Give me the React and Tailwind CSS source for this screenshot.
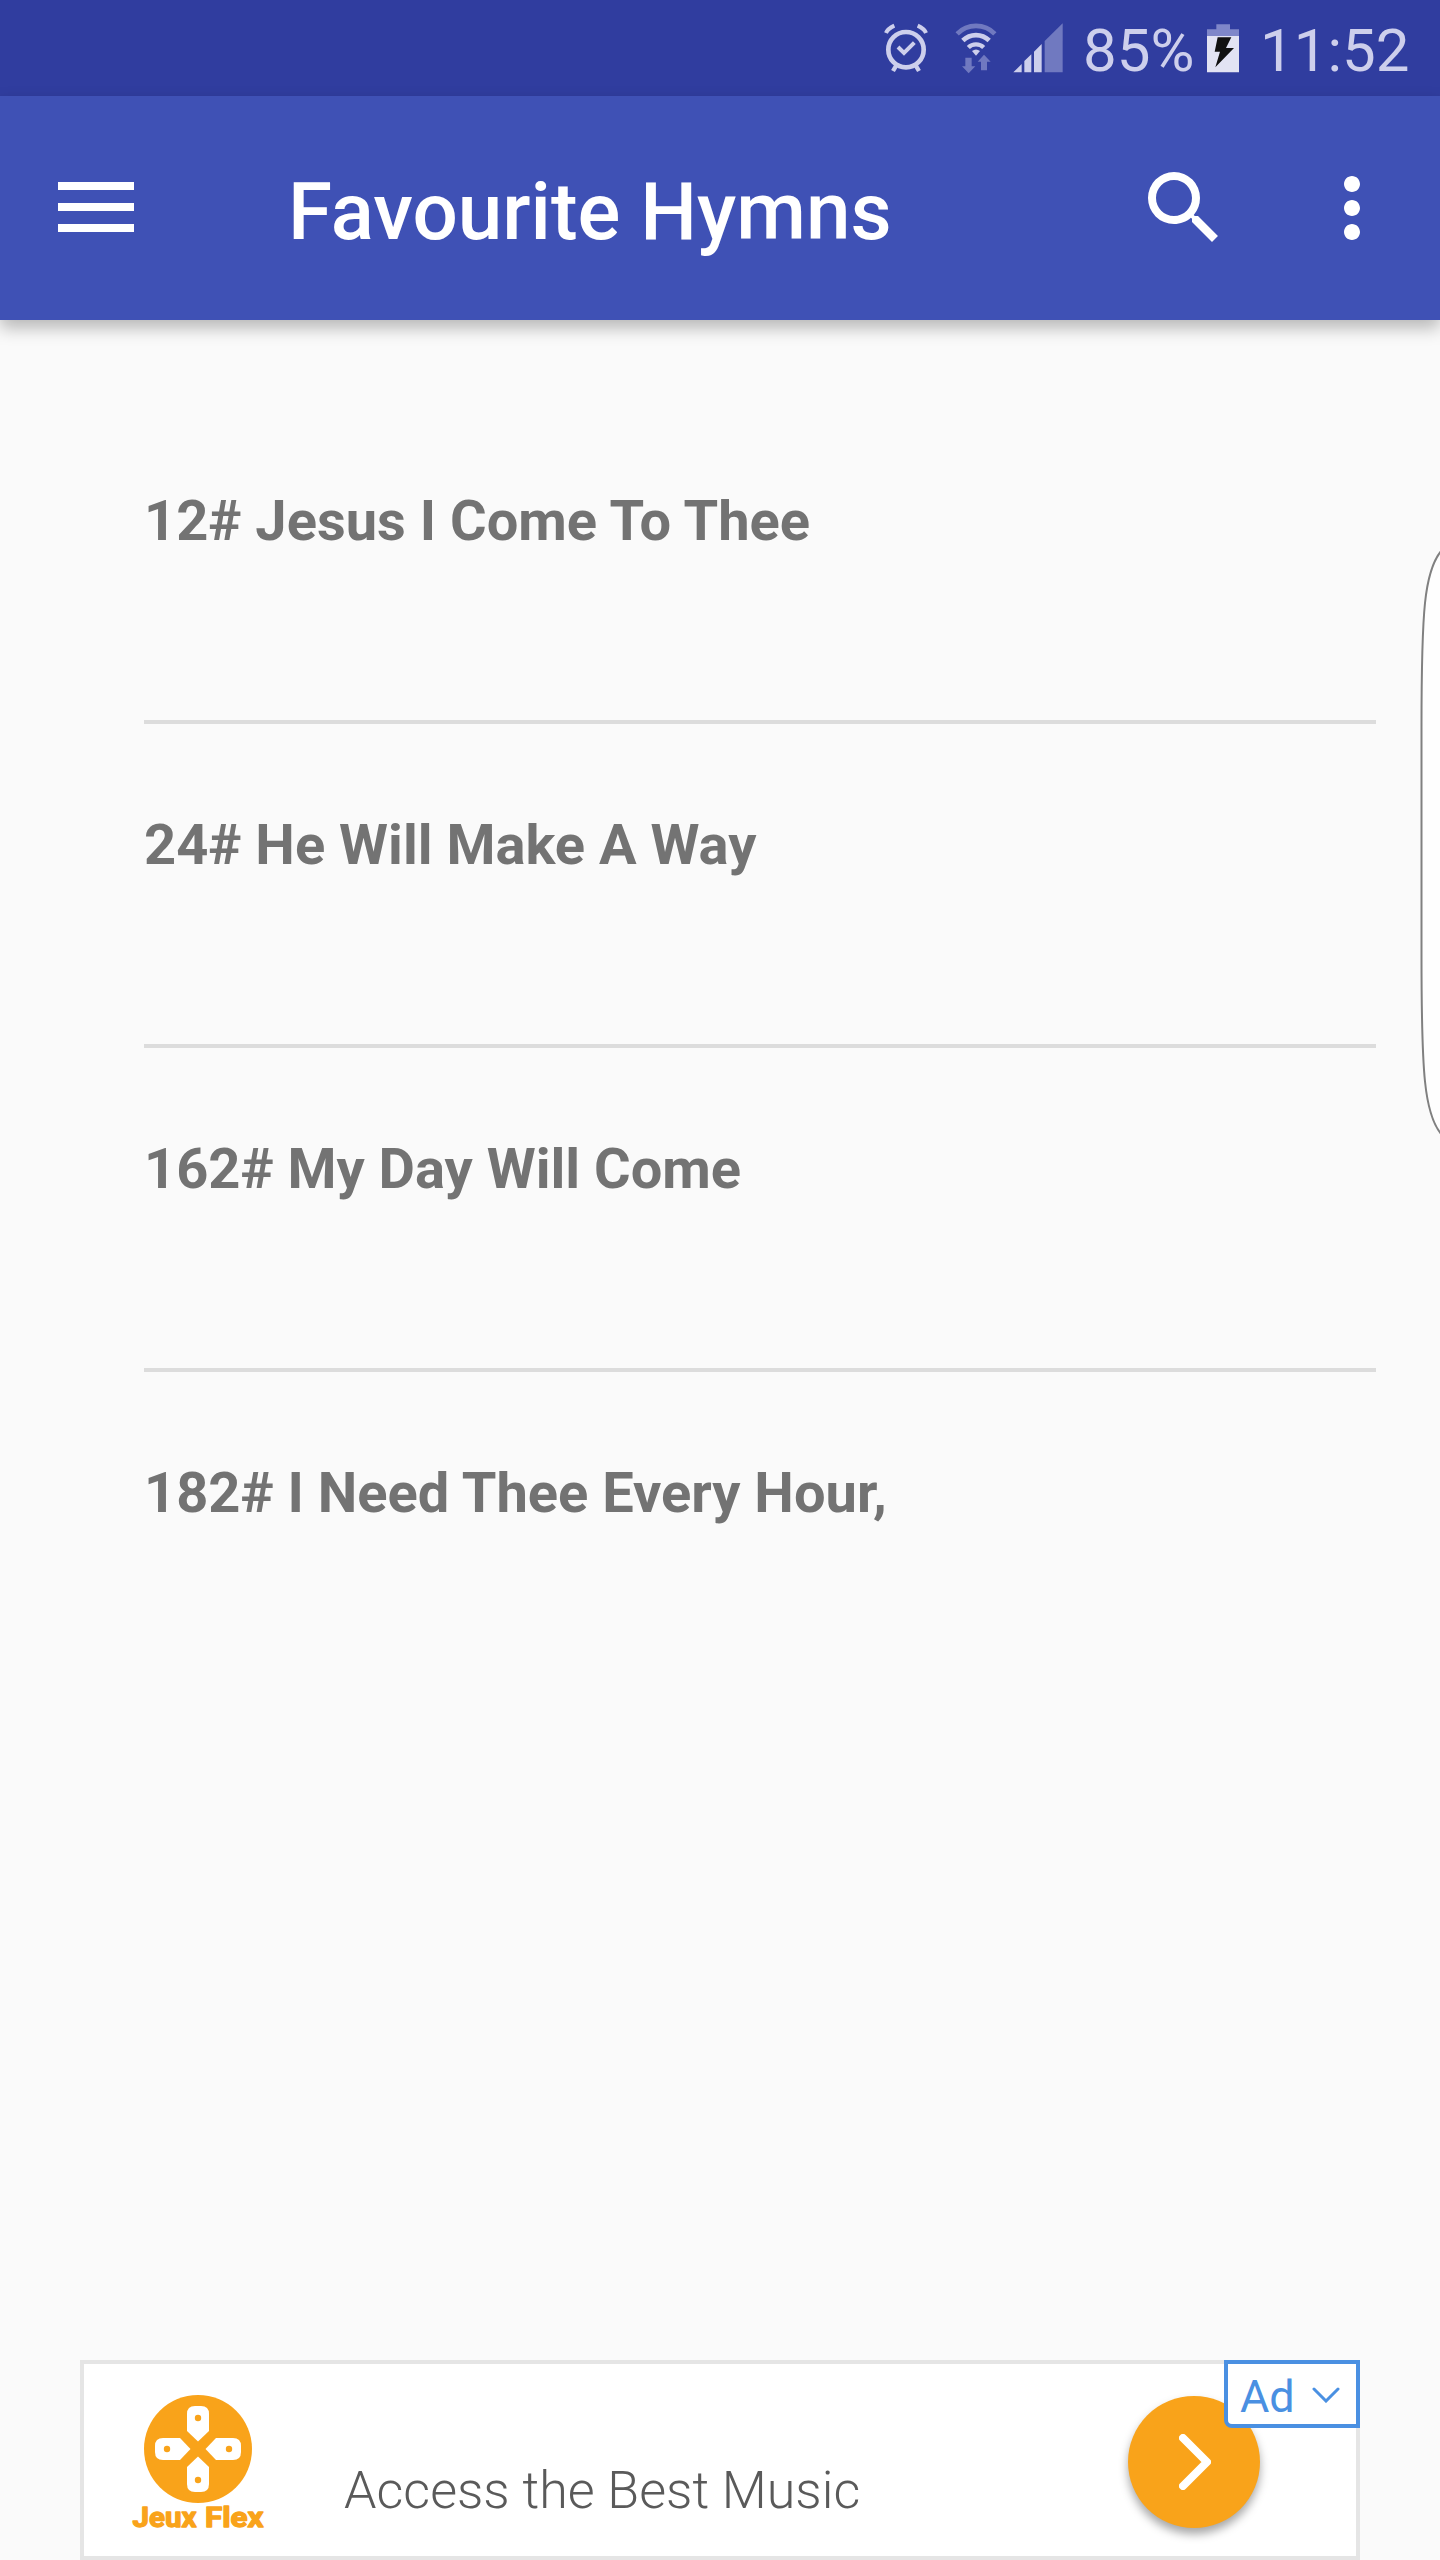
import { MdMoreVert, MdSearch } from 'react-icons/md'

const hymns = [
  { id: 12, title: 'Jesus I Come To Thee' },
  { id: 24, title: 'He Will Make A Way' },
  { id: 162, title: 'My Day Will Come' },
  { id: 182, title: 'I Need Thee Every Hour,' },
]

function AlarmIcon() {
  return (
    <svg className="w-[46px] h-[52px]" viewBox="68 68 138 156" fill="none" stroke="#cdcfec">
      <circle cx="137" cy="151" r="53" strokeWidth="14" />
      <path d="M113 143l18 18 31-31" strokeWidth="12" />
      <path d="M77 101c4-10 12-16 25-22M197 101c-4-10-12-16-25-22" strokeWidth="12" />
      <path d="M108 198l-10 17M166 198l10 17" strokeWidth="13" />
    </svg>
  )
}

function WifiIcon() {
  return (
    <svg className="w-[44px] h-[52px] ml-[25px] mr-[2px]" viewBox="283 68 132 156" fill="none">
      <path d="M292.500 103.500a79 79 0 0 1 113 0" stroke="#7079c0" strokeWidth="14" />
      <path d="M309.500 123.500a56 56 0 0 1 79 0" stroke="#cdcfec" strokeWidth="14" />
      <path d="M326 144.500a33 33 0 0 1 46 0" stroke="#cdcfec" strokeWidth="13" />
      <path d="M337 155q12-9 24 0l-12 14z" fill="#cdcfec" />
      <path d="M317 175h19v26h11l-20 21-20-21h10z" fill="#7079c0" />
      <path d="M364 213h18v-26h11l-20-21-19 21h10z" fill="#7079c0" />
    </svg>
  )
}

function SignalIcon() {
  return (
    <svg className="w-[50px] h-[52px] ml-[13px] mr-px" viewBox="460 68 150 156">
      <path d="M461 219h25v-25zM494 219h21v-54l-21 20zM523 219h23v-85l-23 23z" fill="#cdcfec" />
      <path d="M555 219h54V72l-54 53z" fill="#7079c0" />
    </svg>
  )
}

function BatteryIcon() {
  return (
    <svg className="w-8 h-[52px]" viewBox="171 68 96 156">
      <path d="M199 75h41v15h27v20h-96V90h28z" fill="#7f87c9" />
      <path d="M171 110h96v109h-96z" fill="#e2e3f3" />
      <path d="M203 114h41l-16 32h24l-56 58 14-47h-16z" fill="#111" />
    </svg>
  )
}

function StatusBar() {
  return (
    <div className="flex items-center h-24 pl-[883px] pb-px bg-[#303d9f] text-[60px] leading-[70px] text-[#cdcfec] whitespace-nowrap">
      <AlarmIcon />
      <WifiIcon />
      <SignalIcon />
      <span className="w-[124px] ml-[19px] pt-[7px]">85%</span>
      <BatteryIcon />
      <span className="ml-[21px] pt-[7px]">11:52</span>
    </div>
  )
}

function AppBar() {
  return (
    <header className="flex items-center h-56 pl-[58px] pr-10 bg-[#3f51b5] text-white shadow-[0_8px_16px_rgba(0,0,0,0.27)]">
      <button>
        <svg className="w-[76px] h-[50px] mb-[2px]" viewBox="0 0 76 50" fill="currentColor">
          <path d="M0 0h76v8H0zM0 21h76v8H0zM0 42h76v8H0z" />
        </svg>
      </button>
      <h1 className="ml-[154px] mt-[7px] text-[80px] leading-[94px] font-medium">Favourite Hymns</h1>
      <div className="flex gap-[72px] ml-auto">
        <button>
          <MdSearch className="w-24 h-24" />
        </button>
        <button>
          <MdMoreVert className="w-24 h-24" />
        </button>
      </div>
    </header>
  )
}

function JeuxFlexLogo() {
  return (
    <svg className="w-[140px] h-[144px]" viewBox="0 0 140 144">
      <circle cx="70" cy="57" r="54" fill="#f9a31a" />
      {[0, 90, 180, 270].map((angle) => (
        <g key={angle} transform={`rotate(${angle} 70 57)`}>
          <path d="M59 39V22q0-8 8-8h6q8 0 8 8v17L70 49.500z" fill="#fff" />
          <circle cx="70" cy="26" r="3.200" fill="#f9a31a" />
        </g>
      ))}
      <g
        fill="#f9a31a"
        stroke="#f9a31a"
        strokeWidth="1.300"
        strokeLinejoin="round"
        className="font-['Roboto'] font-bold text-[28px]"
      >
        <text x="4.500" y="135" textLength="64" lengthAdjust="spacingAndGlyphs">
          Jeux
        </text>
        <text x="77" y="135" textLength="58.500" lengthAdjust="spacingAndGlyphs">
          Flex
        </text>
      </g>
    </svg>
  )
}

function AdBanner() {
  return (
    <div className="relative flex w-[1280px] h-[200px] ml-20 mt-auto bg-white border-4 border-[#e5e5e5]">
      <div className="ml-11 mt-7">
        <JeuxFlexLogo />
      </div>
      <p className="ml-[76px] mt-24 text-[52px] leading-[61px] font-light text-[#5a5a5a]">Access the Best Music</p>
      <button className="flex items-center justify-center w-[132px] h-[132px] ml-auto mr-24 mt-8 rounded-full bg-[#f9a31a] shadow-[0_6px_10px_rgba(0,0,0,0.35)]">
        <svg className="w-8 h-14 ml-[2px]" viewBox="0 0 32 56" fill="none" stroke="#fff" strokeWidth="8" strokeLinecap="round" strokeLinejoin="round">
          <path d="M4 4l24 24L4 52" />
        </svg>
      </button>
      <div className="absolute -top-1 -right-1 flex items-center w-[136px] h-[68px] pl-3 bg-white border-4 border-[#4a90e2] rounded-bl-lg">
        <span className="mt-1 text-[45px] leading-[53px] text-[#4a90e2]">Ad</span>
        <svg className="absolute left-[84px] top-[23px] w-7 h-4" viewBox="0 0 28 16" fill="none" stroke="#4a90e2" strokeWidth="3" strokeLinecap="round">
          <path d="M2 2l12 12L26 2" />
        </svg>
      </div>
    </div>
  )
}

export default function App() {
  return (
    <div className="relative flex flex-col w-[1440px] h-[2560px] overflow-hidden bg-[#fafafa] font-['Roboto',sans-serif]">
      <StatusBar />
      <AppBar />

      <ul className="mt-20 ml-36 mr-16 divide-y-4 divide-[#dcdcdc]">
        {hymns.map((hymn) => (
          <li key={hymn.id} className="box-content h-80">
            <p className="pt-[88px] text-[56px] leading-[66px] font-bold text-[#737373]">
              {hymn.id}# {hymn.title}
            </p>
          </li>
        ))}
      </ul>

      <AdBanner />

      {/* Edge panel handle */}
      <svg className="absolute right-0 top-[542px] w-5 h-[600px]" viewBox="1420 542 20 600">
        <path
          d="M1442 550C1424 570 1421.500 612 1421.500 728V956C1421.500 1072 1424 1115 1442 1135"
          fill="#fefefe"
          stroke="#808080"
          strokeWidth="2"
        />
      </svg>
    </div>
  )
}
